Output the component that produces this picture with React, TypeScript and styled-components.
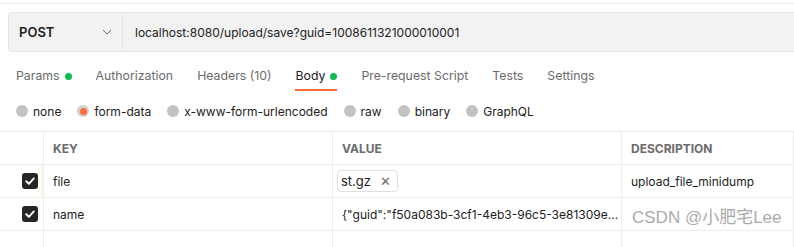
import React, { FC } from 'react';
import styled, { createGlobalStyle } from 'styled-components';

const GlobalStyle = createGlobalStyle`
  html, body {
    margin: 0;
    padding: 0;
    background: #ffffff;
    overflow: hidden;
  }
  body {
    font-family: Inter, "Noto Sans", "Noto Sans CJK SC", sans-serif;
    color: #212121;
  }
`;

const Page = styled.div`
  position: relative;
  width: 794px;
  height: 247px;
  overflow: hidden;
  border-top: 1px solid #ffffff;
`;

const TopRule = styled.div`
  height: 2px;
  border-bottom: 1px solid #ececec;
`;

const RequestBar = styled.div`
  display: flex;
  height: 38px;
  margin: 8px -10px 0 8px;
  background: #f2f2f2;
  border: 1px solid #e4e4e4;
  border-radius: 4px;
`;

const Method = styled.div`
  display: flex;
  align-items: center;
  justify-content: space-between;
  width: 114px;
  box-sizing: border-box;
  padding: 0 10px 0 10px;
  border-right: 1px solid #e4e4e4;
  font-size: 13px;
  font-weight: 600;
  color: #212121;
`;

const Url = styled.div`
  display: flex;
  align-items: center;
  padding-left: 12px;
  font-size: 12px;
  color: #212121;
`;

const Tabs = styled.div`
  display: flex;
  gap: 24px;
  padding-left: 16px;
`;

const Tab = styled.div<{ $active?: boolean }>`
  display: flex;
  align-items: flex-start;
  gap: 5px;
  height: 39px;
  box-sizing: border-box;
  padding-top: 16px;
  font-size: 12.3px;
  line-height: 16px;
  color: ${(p) => (p.$active ? '#212121' : '#6b6b6b')};
  border-bottom: 2px solid ${(p) => (p.$active ? '#ff6c37' : 'transparent')};
`;

const Dot = styled.span`
  width: 7px;
  height: 7px;
  margin-top: 5px;
  border-radius: 50%;
  background: #0cbb52;
`;

const Radios = styled.div`
  display: flex;
  align-items: center;
  gap: 16px;
  height: 40px;
  padding-left: 16px;
`;

const RadioItem = styled.label`
  display: flex;
  align-items: center;
  gap: 5px;
  font-size: 12px;
  color: #212121;
`;

const Radio = styled.span<{ $on?: boolean }>`
  position: relative;
  width: 12px;
  height: 12px;
  border-radius: 50%;
  background: ${(p) => (p.$on ? '#cfcfcf' : '#c2c2c2')};
  &::after {
    content: '';
    display: ${(p) => (p.$on ? 'block' : 'none')};
    position: absolute;
    left: 3px;
    top: 3px;
    width: 7px;
    height: 7px;
    margin: -0.5px;
    border-radius: 50%;
    background: #ff6c37;
  }
`;

const Table = styled.div`
  display: grid;
  grid-template-columns: 44px 289px 289px 1fr;
  border-top: 1px solid #ececec;
`;

const Cell = styled.div<{ $muted?: boolean }>`
  display: flex;
  align-items: center;
  height: 32px;
  padding-left: 9px;
  border-bottom: 1px solid #ececec;
  border-right: 1px solid #ececec;
  font-size: 12px;
  color: ${(p) => (p.$muted ? '#a6a6a6' : '#212121')};
  white-space: nowrap;
  overflow: hidden;
`;

const HeadCell = styled(Cell)`
  font-size: 12px;
  font-weight: 700;
  color: #6b6b6b;
`;

const CheckCell = styled.div<{ $handle?: boolean }>`
  display: flex;
  align-items: center;
  justify-content: flex-end;
  height: 32px;
  padding-right: 4px;
  border-bottom: 1px solid #ececec;
  border-right: 1px solid #ececec;
  box-shadow: ${(p) => (p.$handle ? 'inset -2px 0 0 #fff6dc' : 'none')};
`;

const Box = styled.span<{ $checked?: boolean }>`
  display: flex;
  align-items: center;
  justify-content: center;
  width: 16px;
  height: 16px;
  margin-right: 1px;
  box-sizing: border-box;
  border-radius: 3px;
  background: ${(p) => (p.$checked ? '#262626' : '#ffffff')};
  border: ${(p) => (p.$checked ? 'none' : '1px solid #bdbdbd')};
  margin-top: ${(p) => (p.$checked ? '0' : '18px')};
`;

const FileChip = styled.span`
  display: inline-flex;
  align-items: center;
  gap: 9px;
  height: 20px;
  margin-left: -5px;
  padding: 0 6px 0 3px;
  border: 1px solid #e0e0e0;
  border-radius: 4px;
  font-size: 13px;
  color: #212121;
`;

const Close = styled.span`
  font-size: 13px;
  color: #6b6b6b;
`;

const Faded = styled.span`
  margin-top: 28px;
`;

const Watermark = styled.div`
  position: absolute;
  left: 632px;
  top: 202px;
  font-size: 17px;
  color: rgba(130, 130, 130, 0.7);
  font-family: "Liberation Sans", "Noto Sans CJK SC", sans-serif;
  pointer-events: none;
`;

const Check: FC = () => (
  <svg width="12" height="12" viewBox="0 0 12 12">
    <path d="M2.2 6.2 L4.9 8.8 L9.8 3.4" fill="none" stroke="#fff" strokeWidth="1.9" strokeLinecap="round" strokeLinejoin="round" />
  </svg>
);

const Chevron: FC = () => (
  <svg width="10" height="6" viewBox="0 0 10 6">
    <path d="M1 1 L5 5 L9 1" fill="none" stroke="#6b6b6b" strokeWidth="1" />
  </svg>
);

const tabs = [
  { label: 'Params', dot: true },
  { label: 'Authorization' },
  { label: 'Headers (10)' },
  { label: 'Body', dot: true, active: true },
  { label: 'Pre-request Script' },
  { label: 'Tests' },
  { label: 'Settings' },
];

const bodyTypes = ['none', 'form-data', 'x-www-form-urlencoded', 'raw', 'binary', 'GraphQL'];

const App: FC = () => {
  return (
    <Page>
      <GlobalStyle />
      <TopRule />
      <RequestBar>
        <Method>
          POST
          <Chevron />
        </Method>
        <Url>localhost:8080/upload/save?guid=1008611321000010001</Url>
      </RequestBar>
      <Tabs>
        {tabs.map((t) => (
          <Tab key={t.label} $active={t.active}>
            {t.label}
            {t.dot && <Dot />}
          </Tab>
        ))}
      </Tabs>
      <Radios>
        {bodyTypes.map((b) => (
          <RadioItem key={b}>
            <Radio $on={b === 'form-data'} />
            {b}
          </RadioItem>
        ))}
      </Radios>
      <Table>
        <CheckCell />
        <HeadCell>KEY</HeadCell>
        <HeadCell>VALUE</HeadCell>
        <HeadCell>DESCRIPTION</HeadCell>

        <CheckCell $handle>
          <Box $checked>
            <Check />
          </Box>
        </CheckCell>
        <Cell>file</Cell>
        <Cell>
          <FileChip>
            st.gz
            <Close>✕</Close>
          </FileChip>
        </Cell>
        <Cell>upload_file_minidump</Cell>

        <CheckCell>
          <Box $checked>
            <Check />
          </Box>
        </CheckCell>
        <Cell>name</Cell>
        <Cell>{'{"guid":"f50a083b-3cf1-4eb3-96c5-3e81309e...'}</Cell>
        <Cell />

        <CheckCell>
          <Box />
        </CheckCell>
        <Cell $muted>
          <Faded>age</Faded>
        </Cell>
        <Cell $muted>
          <Faded>18</Faded>
        </Cell>
        <Cell />
      </Table>
      <Watermark>CSDN @小肥宅Lee</Watermark>
    </Page>
  );
};

export default App;
